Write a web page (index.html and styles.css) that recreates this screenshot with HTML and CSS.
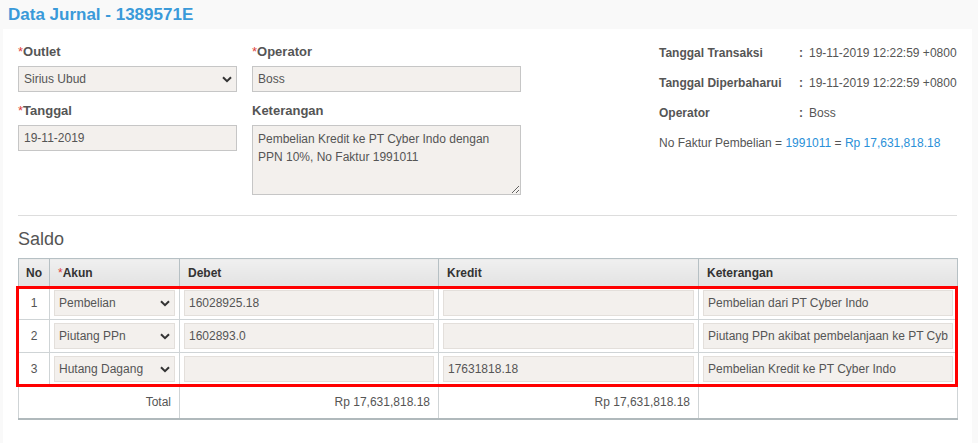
FILE: index.html
```html
<!DOCTYPE html>
<html lang="id">
<head>
    <meta charset="UTF-8">
    <title>Data Jurnal - 1389571E</title>
    <link rel="stylesheet" href="styles.css">
</head>
<body>
    <div class="page-title">Data Jurnal - 1389571E</div>
    <div class="panel">
        <div class="top">
            <div class="form-grid">
                <div class="field">
                    <label><span class="req">*</span>Outlet</label>
                    <div class="select-wrap">
                        <select class="ctrl"><option>Sirius Ubud</option></select>
                        <svg class="chev" width="10" height="7" viewBox="0 0 10 7"><path d="M1 1.2 L5 5.2 L9 1.2" fill="none" stroke="#333" stroke-width="2"/></svg>
                    </div>
                </div>
                <div class="field">
                    <label><span class="req">*</span>Operator</label>
                    <input class="ctrl" type="text" value="Boss">
                </div>
                <div class="field">
                    <label><span class="req">*</span>Tanggal</label>
                    <input class="ctrl" type="text" value="19-11-2019">
                </div>
                <div class="field">
                    <label>Keterangan</label>
                    <textarea class="ctrl notes">Pembelian Kredit ke PT Cyber Indo dengan PPN 10%, No Faktur 1991011</textarea>
                </div>
            </div>
            <div class="info">
                <div class="info-row"><span class="info-label">Tanggal Transaksi</span><span class="colon">:</span><span>19-11-2019 12:22:59 +0800</span></div>
                <div class="info-row"><span class="info-label">Tanggal Diperbaharui</span><span class="colon">:</span><span>19-11-2019 12:22:59 +0800</span></div>
                <div class="info-row"><span class="info-label">Operator</span><span class="colon">:</span><span>Boss</span></div>
                <div class="info-row">No Faktur Pembelian = <span class="link">&nbsp;1991011&nbsp;</span> = <span class="link">&nbsp;Rp 17,631,818.18</span></div>
            </div>
        </div>

        <h3 class="section-title">Saldo</h3>
        <div class="table-wrap">
            <table class="saldo">
                <colgroup>
                    <col style="width: 31px">
                    <col style="width: 130px">
                    <col style="width: 259px">
                    <col style="width: 260px">
                    <col style="width: 259px">
                </colgroup>
                <thead>
                    <tr>
                        <th class="no">No</th>
                        <th><span class="req">*</span>Akun</th>
                        <th>Debet</th>
                        <th>Kredit</th>
                        <th>Keterangan</th>
                    </tr>
                </thead>
                <tbody>
                    <tr>
                        <td class="no">1</td>
                        <td><div class="select-wrap"><select class="cell-ctrl"><option>Pembelian</option></select><svg class="chev" width="10" height="7" viewBox="0 0 10 7"><path d="M1 1.2 L5 5.2 L9 1.2" fill="none" stroke="#333" stroke-width="2"/></svg></div></td>
                        <td><input class="cell-ctrl" type="text" value="16028925.18"></td>
                        <td><input class="cell-ctrl" type="text" value=""></td>
                        <td><input class="cell-ctrl" type="text" value="Pembelian dari PT Cyber Indo"></td>
                    </tr>
                    <tr>
                        <td class="no">2</td>
                        <td><div class="select-wrap"><select class="cell-ctrl"><option>Piutang PPn</option></select><svg class="chev" width="10" height="7" viewBox="0 0 10 7"><path d="M1 1.2 L5 5.2 L9 1.2" fill="none" stroke="#333" stroke-width="2"/></svg></div></td>
                        <td><input class="cell-ctrl" type="text" value="1602893.0"></td>
                        <td><input class="cell-ctrl" type="text" value=""></td>
                        <td><input class="cell-ctrl" type="text" value="Piutang PPn akibat pembelanjaan ke PT Cyber Indo"></td>
                    </tr>
                    <tr>
                        <td class="no">3</td>
                        <td><div class="select-wrap"><select class="cell-ctrl"><option>Hutang Dagang</option></select><svg class="chev" width="10" height="7" viewBox="0 0 10 7"><path d="M1 1.2 L5 5.2 L9 1.2" fill="none" stroke="#333" stroke-width="2"/></svg></div></td>
                        <td><input class="cell-ctrl" type="text" value=""></td>
                        <td><input class="cell-ctrl" type="text" value="17631818.18"></td>
                        <td><input class="cell-ctrl" type="text" value="Pembelian Kredit ke PT Cyber Indo"></td>
                    </tr>
                    <tr class="total">
                        <td class="num" colspan="2">Total</td>
                        <td class="num">Rp 17,631,818.18</td>
                        <td class="num">Rp 17,631,818.18</td>
                        <td></td>
                    </tr>
                </tbody>
            </table>
            <div class="highlight"></div>
        </div>
    </div>
</body>
</html>
```

FILE: styles.css
```css
body { margin: 0; background: #f9f9f9; font-family: "Liberation Sans", Arial, sans-serif; font-size: 12px; color: #555; }
.page-title { height: 29px; padding-left: 8px; font-size: 17px; font-weight: bold; line-height: 29px; color: #3a9ad9; }
.panel { margin: 0 6px 0 3px; padding: 14px 15px 30px; background: #fff; min-height: 370px; }
.req { color: #e0413a; font-weight: normal; }

.top { display: flex; justify-content: space-between; padding-bottom: 20px; border-bottom: 1px solid #ddd; }
.form-grid { display: grid; grid-template-columns: 219px 269px; column-gap: 15px; row-gap: 10px; align-items: start; }
.field label { display: block; margin-bottom: 5px; font-size: 13px; font-weight: bold; line-height: 18px; color: #555; }
.ctrl { display: block; width: 100%; height: 26px; box-sizing: border-box; margin: 0; padding: 0 5px; border: 1px solid #c6c6c6; background: #f3f0ed; font-family: inherit; font-size: 12px; color: #555; outline: none; }
select.ctrl, select.cell-ctrl { appearance: none; -webkit-appearance: none; }
.notes { height: 70px; padding: 4px 5px; line-height: 18px; resize: vertical; }
.select-wrap { position: relative; }
.chev { position: absolute; right: 5px; top: 10px; pointer-events: none; }

.info { width: 298px; }
.info-row { display: flex; line-height: 20px; margin-bottom: 10px; white-space: nowrap; }
.info-label { width: 140px; font-weight: bold; color: #555; }
.colon { width: 10px; font-weight: bold; }
.link { color: #2a90d8; }

.section-title { margin: 13px 0 9px; font-size: 18px; font-weight: normal; line-height: 20px; color: #555; }

.table-wrap { position: relative; }
.saldo { width: 100%; border-collapse: collapse; table-layout: fixed; }
.saldo th { height: 27px; padding: 0 8px; border: 1px solid #b6c0c4; background: linear-gradient(#f0f0f0, #e9e9e9 50%, #e3e3e3); text-align: left; font-size: 12px; color: #333; }
.saldo th.no { padding: 0; text-align: center; }
.saldo td { height: 26px; padding: 3px 4px; border: 1px solid #cfd4d6; }
.saldo td.no { text-align: center; padding: 0; }
.cell-ctrl { display: block; width: 100%; height: 26px; box-sizing: border-box; margin: 0; padding: 0 4px; border: 1px solid #e3dfdb; background: #f3f0ed; font-family: inherit; font-size: 12px; color: #555; outline: none; }
.saldo .total td { height: 26px; border-bottom: 2px solid #b0b9bc; }
.saldo .total .num { text-align: right; padding-right: 8px; }
.highlight { position: absolute; left: -2px; right: -1px; top: 28px; height: 101px; border: 3px solid #f00; box-sizing: border-box; pointer-events: none; }
```
